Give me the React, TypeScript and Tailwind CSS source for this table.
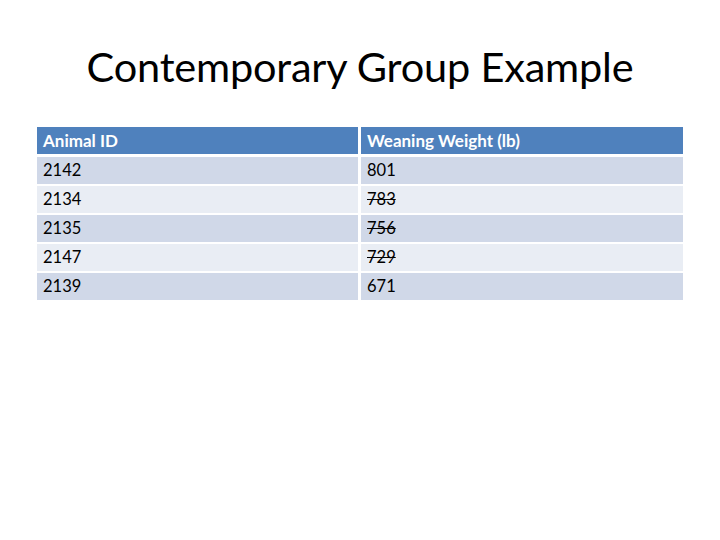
import React from "react";

const rows: { id: string; weight: string; struck?: boolean }[] = [
  { id: "2142", weight: "801" },
  { id: "2134", weight: "783", struck: true },
  { id: "2135", weight: "756", struck: true },
  { id: "2147", weight: "729", struck: true },
  { id: "2139", weight: "671" },
];

const App: React.FC = () => {
  return (
    <div className="w-[720px] h-[540px] bg-white font-['Lato','Open_Sans',sans-serif] text-black">
      <h1 className="pt-[40px] h-[127px] text-center text-[41.5px] leading-[52px] tracking-[-0.2px]">
        Contemporary Group Example
      </h1>
      <div className="ml-[37px] w-[646px] flex flex-col">
        <div className="grid grid-cols-[321px_322px] gap-x-[3px] h-[27px] text-white font-bold text-[17px] mb-[3px]">
          <div className="bg-[#4f81bd] flex items-center pl-[6px]">Animal ID</div>
          <div className="bg-[#4f81bd] flex items-center pl-[6px]">Weaning Weight (lb)</div>
        </div>
        <div className="flex flex-col gap-[2px]">
          {rows.map((r, i) => {
            const bg = i % 2 === 0 ? "bg-[#d0d8e8]" : "bg-[#e9edf4]";
            return (
              <div key={r.id} className="grid grid-cols-[321px_322px] gap-x-[3px] h-[27px] text-[16.5px]">
                <div className={`${bg} flex items-center pl-[6px]`}>{r.id}</div>
                <div className={`${bg} flex items-center pl-[6px]`}>
                  <span className={r.struck ? "line-through" : ""}>{r.weight}</span>
                </div>
              </div>
            );
          })}
        </div>
      </div>
    </div>
  );
};

export default App;
